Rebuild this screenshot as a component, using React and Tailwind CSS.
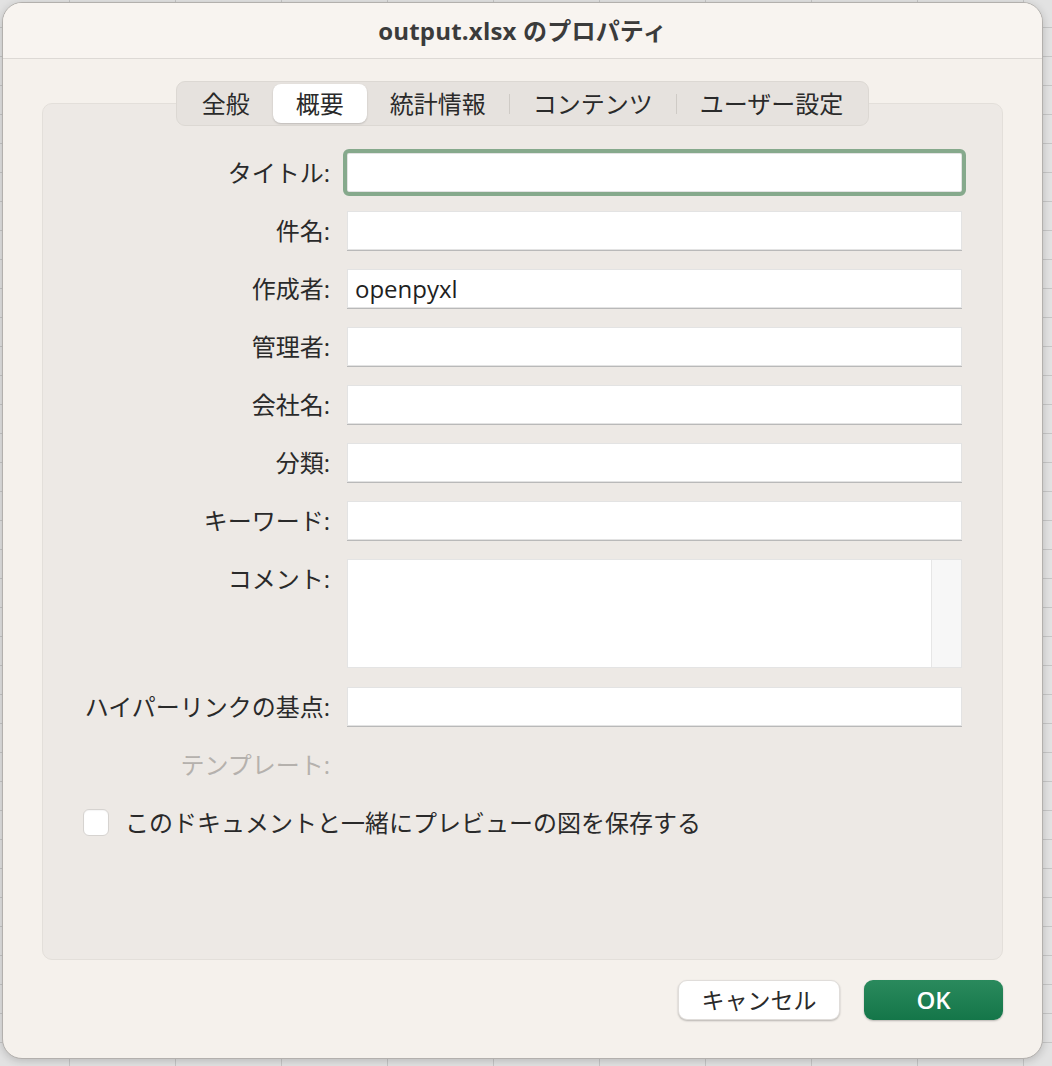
import React from 'react';

const fontStack = "font-['Open_Sans','Noto_Sans_CJK_JP',sans-serif]";

const tabs = ['全般', '概要', '統計情報', 'コンテンツ', 'ユーザー設定'];
const selectedTab = 1;

const fields = [
  { label: 'タイトル', value: '', focused: true },
  { label: '件名', value: '' },
  { label: '作成者', value: 'openpyxl' },
  { label: '管理者', value: '' },
  { label: '会社名', value: '' },
  { label: '分類', value: '' },
  { label: 'キーワード', value: '' },
];

const Label = ({ children, muted }) => (
  <div
    className={`h-[39px] flex items-center justify-end text-[24px] whitespace-nowrap ${
      muted ? 'text-[#b5b1ad]' : 'text-[#2a2a2a]'
    }`}
  >
    {children}:
  </div>
);

const TextInput = ({ value, focused }) => (
  <div
    className={`h-[39px] bg-white border border-[#e3e3e3] shadow-[0_1px_0_#b9b9b9] flex items-center px-[7px] text-[24px] text-[#1f1f1f] ${
      focused ? 'outline-[4px] outline outline-[#86a98c] rounded-[2px]' : ''
    }`}
  >
    {value}
  </div>
);

const TabBar = () => (
  <div className="-mt-[23px] flex items-center p-[2px] rounded-[9px] bg-[#e6e2de] border border-[#dcd8d3]">
    {tabs.map((t, i) => {
      const showSep = i > 0 && i !== selectedTab && i - 1 !== selectedTab;
      return (
        <React.Fragment key={t}>
          {showSep && <div className="w-px h-[20px] bg-[#cfcbc6]" />}
          <div
            className={`h-[39px] px-[23px] flex items-center text-[24px] text-[#2a2a2a] rounded-[8px] ${
              i === selectedTab ? 'bg-white shadow-[0_1px_2px_rgba(0,0,0,0.18)]' : ''
            }`}
          >
            {t}
          </div>
        </React.Fragment>
      );
    })}
  </div>
);

export default function App() {
  return (
    <div
      className={`w-[1052px] h-[1066px] pl-[2px] pt-[2px] bg-[#e2e2e2] bg-[linear-gradient(#c6c6c6_1px,transparent_1px),linear-gradient(90deg,#c6c6c6_1px,transparent_1px)] bg-[size:106px_29px] bg-[position:-37px_-2px] ${fontStack}`}
    >
      <div className="w-[1041px] h-[1057px] rounded-[20px] bg-[#f5f1ec] border border-[#b3b0ad] shadow-[0_2px_8px_rgba(0,0,0,0.18)] flex flex-col overflow-hidden">
        {/* title bar */}
        <div className="h-[56px] shrink-0 bg-[#f8f4f0] border-b border-[#ddd9d5] flex items-center justify-center">
          <span className="text-[24px] font-bold text-[#3b3b3b] tracking-[0.2px]">output.xlsx のプロパティ</span>
        </div>

        {/* panel */}
        <div className="mx-[39px] mt-[44px] h-[857px] rounded-[10px] bg-[#ede9e5] border border-[#e3dfda] flex flex-col items-center">
          <TabBar />

          <div className="self-stretch px-[40px] pt-[27px] grid grid-cols-[247px_1fr] gap-x-[17px] gap-y-[19px]">
            {fields.map((f) => (
              <React.Fragment key={f.label}>
                <Label>{f.label}</Label>
                <TextInput value={f.value} focused={f.focused} />
              </React.Fragment>
            ))}

            <Label>コメント</Label>
            <div className="h-[109px] bg-white border border-[#e4e4e4] flex justify-end">
              <div className="w-[30px] h-full bg-[#f7f7f7] border-l border-[#e6e6e6]" />
            </div>

            <Label>ハイパーリンクの基点</Label>
            <TextInput value="" />

            <Label muted>テンプレート</Label>
            <div />
          </div>

          <div className="self-stretch px-[40px] mt-[19px] h-[39px] flex items-center gap-[16px]">
            <div className="w-[26px] h-[27px] rounded-[6px] bg-white border border-[#d6d3d0] shadow-[inset_0_1px_1px_rgba(0,0,0,0.04)]" />
            <span className="text-[24px] text-[#2a2a2a]">このドキュメントと一緒にプレビューの図を保存する</span>
          </div>
        </div>

        {/* buttons */}
        <div className="mt-[20px] mr-[39px] flex justify-end gap-[24px]">
          <button className="w-[162px] h-[40px] rounded-[9px] bg-white shadow-[0_1px_2px_rgba(0,0,0,0.25)] border border-[#e0ddda] text-[23px] text-[#2a2a2a] flex items-center justify-center">
            キャンセル
          </button>
          <button className="w-[139px] h-[40px] rounded-[9px] bg-[linear-gradient(#2a8a5d,#147649)] shadow-[0_1px_2px_rgba(0,0,0,0.25)] text-[24px] font-semibold text-white flex items-center justify-center">
            OK
          </button>
        </div>
      </div>
    </div>
  );
}
